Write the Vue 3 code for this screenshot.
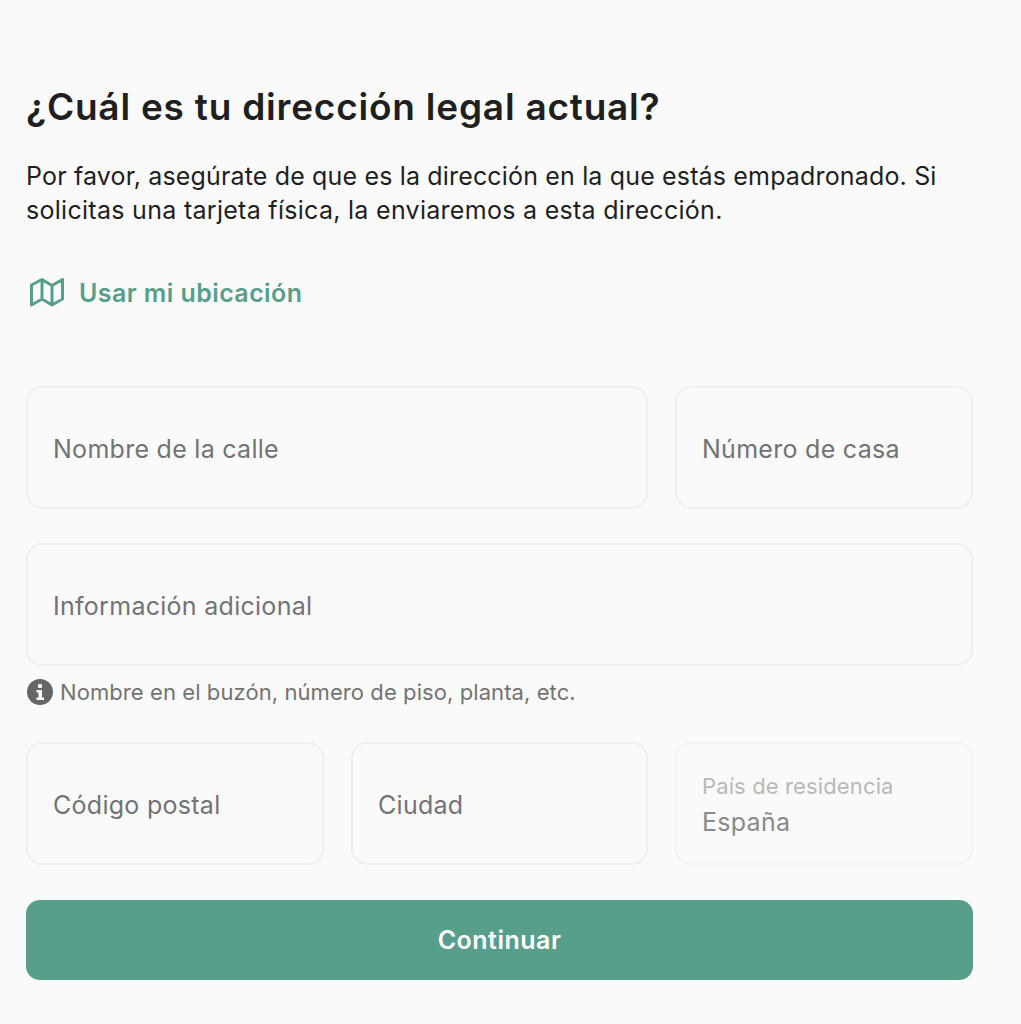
<script setup>
const firstRow = [
  { label: "Nombre de la calle", size: "wide" },
  { label: "Número de casa", size: "narrow" },
];
</script>

<template>
  <main class="page">
    <h1 class="title">¿Cuál es tu dirección legal actual?</h1>
    <p class="intro">
      Por favor, asegúrate de que es la dirección en la que estás empadronado. Si
      <span class="intro-tail">solicitas una tarjeta física, la enviaremos a esta dirección.</span>
    </p>

    <button type="button" class="location">
      <svg class="map-icon" viewBox="0 0 34 30" fill="none">
        <path
          d="M1.5 7 L12 1.5 L22 7.5 L32.5 1.5 V21 L22 27 L12 21 L1.5 27 Z M12 1.5 V21 M22 7.5 V27"
          stroke="currentColor"
          stroke-width="3"
          stroke-linejoin="round"
          stroke-linecap="round"
        />
      </svg>
      Usar mi ubicación
    </button>

    <form class="form" @submit.prevent>
      <div class="row row-street">
        <div v-for="field in firstRow" :key="field.label" class="field">
          {{ field.label }}
        </div>
      </div>

      <div class="field extra">Información adicional</div>
      <div class="hint">
        <svg class="info-icon" viewBox="0 0 26 26">
          <circle cx="13" cy="13" r="13" fill="#666" />
          <rect x="11" y="5" width="4" height="4" rx="1" fill="#fafafa" />
          <path d="M9.5 11 H15 V18.5 H17 V21 H9.5 V18.5 H11.5 V13.5 H9.5 Z" fill="#fafafa" />
        </svg>
        <span>Nombre en el buzón, número de piso, planta, etc.</span>
      </div>

      <div class="row row-city">
        <div class="field">Código postal</div>
        <div class="field">Ciudad</div>
        <div class="field field-disabled">
          <span class="mini-label">País de residencia</span>
          <span class="value">España</span>
        </div>
      </div>

      <button type="submit" class="submit">Continuar</button>
    </form>
  </main>
</template>

<style scoped>
.page {
  box-sizing: border-box;
  width: 1021px;
  height: 1024px;
  padding: 84px 48px 0 26px;
  background: #fafafa;
  font-family: Inter, "Liberation Sans", sans-serif;
  color: #1f1f1f;
  overflow: hidden;
}
.title {
  margin: 0;
  font-size: 37px;
  line-height: 46px;
  font-weight: 600;
  letter-spacing: 0.78px;
}
.intro {
  margin: 29px 0 0;
  font-size: 25px;
  line-height: 34px;
  font-weight: 400;
  letter-spacing: 0.16px;
  max-width: 947px;
}
.intro-tail {
  letter-spacing: 0.29px;
}
.location {
  display: flex;
  align-items: center;
  gap: 15px;
  margin: 50px 0 0 4px;
  padding: 0;
  border: none;
  background: none;
  color: #589f8b;
  font-family: inherit;
  font-size: 25px;
  line-height: 32px;
  font-weight: 600;
  letter-spacing: 0.42px;
}
.map-icon {
  width: 34px;
  height: 30px;
}
.form {
  margin-top: 77px;
}
.row {
  display: grid;
  gap: 27px;
}
.row-street {
  grid-template-columns: 622px 298px;
}
.row-city {
  grid-template-columns: 298px 297px 298px;
  margin-top: 35px;
}
.field {
  box-sizing: border-box;
  height: 123px;
  padding: 2px 25px 0;
  display: flex;
  flex-direction: column;
  justify-content: center;
  border: 2px solid #f0f0f0;
  border-radius: 16px;
  font-size: 25px;
  letter-spacing: 0.28px;
  color: #737373;
}
.extra {
  margin-top: 34px;
}
.field-disabled {
  border-color: #f4f4f4;
}
.mini-label {
  font-size: 22px;
  line-height: 28px;
  letter-spacing: 0.13px;
  color: #b9b9b9;
}
.value {
  margin-top: 6px;
  line-height: 32px;
  color: #8a8a8a;
}
.hint {
  display: flex;
  align-items: center;
  gap: 7px;
  margin: 12px 0 0 1px;
  font-size: 22px;
  line-height: 28px;
  letter-spacing: 0.08px;
  color: #737373;
}
.info-icon {
  width: 26px;
  height: 26px;
}
.submit {
  display: block;
  width: 100%;
  height: 80px;
  margin-top: 36px;
  border: none;
  border-radius: 14px;
  background: #579f8b;
  color: #ffffff;
  font-family: inherit;
  font-size: 25px;
  font-weight: 600;
  letter-spacing: 0.5px;
}
.row-city {
  margin-top: 36px;
}
.row-city + .submit {
  margin-top: 35px;
}
</style>
